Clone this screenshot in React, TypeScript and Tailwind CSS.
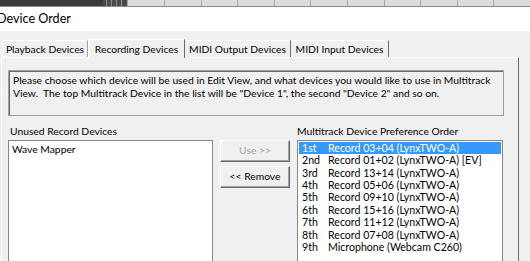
import React from "react";

const rows: [string, string][] = [
  ["1st", "Record 03+04 (LynxTWO-A)"],
  ["2nd", "Record 01+02 (LynxTWO-A) [EV]"],
  ["3rd", "Record 13+14 (LynxTWO-A)"],
  ["4th", "Record 05+06 (LynxTWO-A)"],
  ["5th", "Record 09+10 (LynxTWO-A)"],
  ["6th", "Record 15+16 (LynxTWO-A)"],
  ["7th", "Record 11+12 (LynxTWO-A)"],
  ["8th", "Record 07+08 (LynxTWO-A)"],
  ["9th", "Microphone (Webcam C260)"],
];

export default function App() {
  const cells = Array.from({ length: 11 });
  return (
    <div
      className="w-[530px] h-[261px] overflow-hidden bg-[#f0f0f0] text-black flex flex-col"
      style={{ fontFamily: 'Lato, "Liberation Sans", Arial, sans-serif' }}
    >
      {/* top strip of underlying window */}
      <div className="h-[7px] flex shrink-0 border-b border-[#8a8a8a]">
        <div className="w-[106px] bg-[#3a3a3c]" />
        <div className="w-[25px] flex bg-[#4a4a4e]">
          <div className="w-[4px] border-r border-[#8a8a90]" />
          <div className="w-[5px] border-r border-[#8a8a90]" />
          <div className="w-[5px] border-r border-[#8a8a90]" />
          <div className="w-[5px] border-r border-[#9a9aa0]" />
        </div>
        <div className="flex-1 flex bg-[#dcdce0]">
          {cells.map((_, i) => (
            <div key={i} className="w-[36.6px] shrink-0 border-l border-[#a8a8ac]" />
          ))}
        </div>
      </div>
      {/* title bar */}
      <div className="h-[24px] bg-white shrink-0 flex items-center">
        <span className="ml-[-3px] text-[12.6px] leading-none whitespace-nowrap">
          Device Order
        </span>
      </div>
      {/* body */}
      <div className="flex-1 pt-[7px] pl-[1px] flex flex-col">
        {/* tabs */}
        <div className="flex items-end h-[19px] pl-[1px] text-[10.3px] leading-none whitespace-nowrap">
          <div className="w-[86px] h-[17px] flex items-center justify-center border-t border-l border-white border-r border-r-[#a0a0a0]">
            Playback Devices
          </div>
          <div className="w-[97px] h-[19px] flex items-center justify-center bg-[#f0f0f0] border-t border-l border-white border-r border-r-[#696969] relative z-10 mb-[-1px]">
            Recording Devices
          </div>
          <div className="w-[106px] h-[17px] flex items-center justify-center border-t border-white border-r border-r-[#696969]">
            MIDI Output Devices
          </div>
          <div className="w-[98px] h-[17px] flex items-center justify-center border-t border-white border-r border-r-[#696969]">
            MIDI Input Devices
          </div>
        </div>
        <div className="flex flex-1">
          {/* panel */}
          <div className="w-[518px] border-t border-l border-white border-r border-r-[#696969] pl-[6px] pr-[14px] pt-[12px] text-[10.3px]">
            <div className="h-[46px] border border-[#a0a0a0] shadow-[inset_1px_1px_0_#696969] px-[4px] pt-[3px] leading-[13px] whitespace-nowrap">
              Please choose which device will be used in Edit View, and what devices you would like to use in Multitrack
              <br />
              View.&nbsp; The top Multitrack Device in the list will be "Device 1", the second "Device 2" and so on.
            </div>
            <div className="flex mt-[9px]">
              <div className="w-[205px] flex flex-col">
                <div className="pl-[2px] h-[15px] leading-[12px] whitespace-nowrap">Unused Record Devices</div>
                <div className="h-[140px] bg-white border border-[#828790] pl-[3px] pt-[2px] leading-[12px]">
                  Wave Mapper
                </div>
              </div>
              <div className="w-[70px] ml-[7px] pt-[15px] flex flex-col gap-[4px]">
                <div className="h-[22px] flex items-center justify-center text-[#a0a0a0] border border-t-white border-l-white border-r-[#696969] border-b-[#696969] shadow-[inset_-1px_-1px_0_#a0a0a0]">
                  Use &gt;&gt;
                </div>
                <div className="h-[22px] flex items-center justify-center border border-t-white border-l-white border-r-[#696969] border-b-[#696969] shadow-[inset_-1px_-1px_0_#a0a0a0]">
                  &lt;&lt; Remove
                </div>
              </div>
              <div className="w-[206px] ml-[7px] flex flex-col">
                <div className="h-[15px] leading-[12px] whitespace-nowrap">Multitrack Device Preference Order</div>
                <div className="h-[140px] bg-white border border-[#828790] p-[1px] text-[10.6px]">
                  {rows.map(([a, b], i) => (
                    <div
                      key={i}
                      className={
                        "h-[12.4px] flex items-center pl-[3px] leading-none whitespace-nowrap " +
                        (i === 0 ? "bg-[#3399ff] text-white" : "")
                      }
                    >
                      <span className="w-[26px]">{a}</span>
                      <span>{b}</span>
                    </div>
                  ))}
                </div>
              </div>
            </div>
          </div>
          <div className="flex-1 flex flex-col justify-end pl-[6px]">
            <div className="h-[5px] border-t border-l border-[#707070] bg-white" />
          </div>
        </div>
      </div>
    </div>
  );
}
